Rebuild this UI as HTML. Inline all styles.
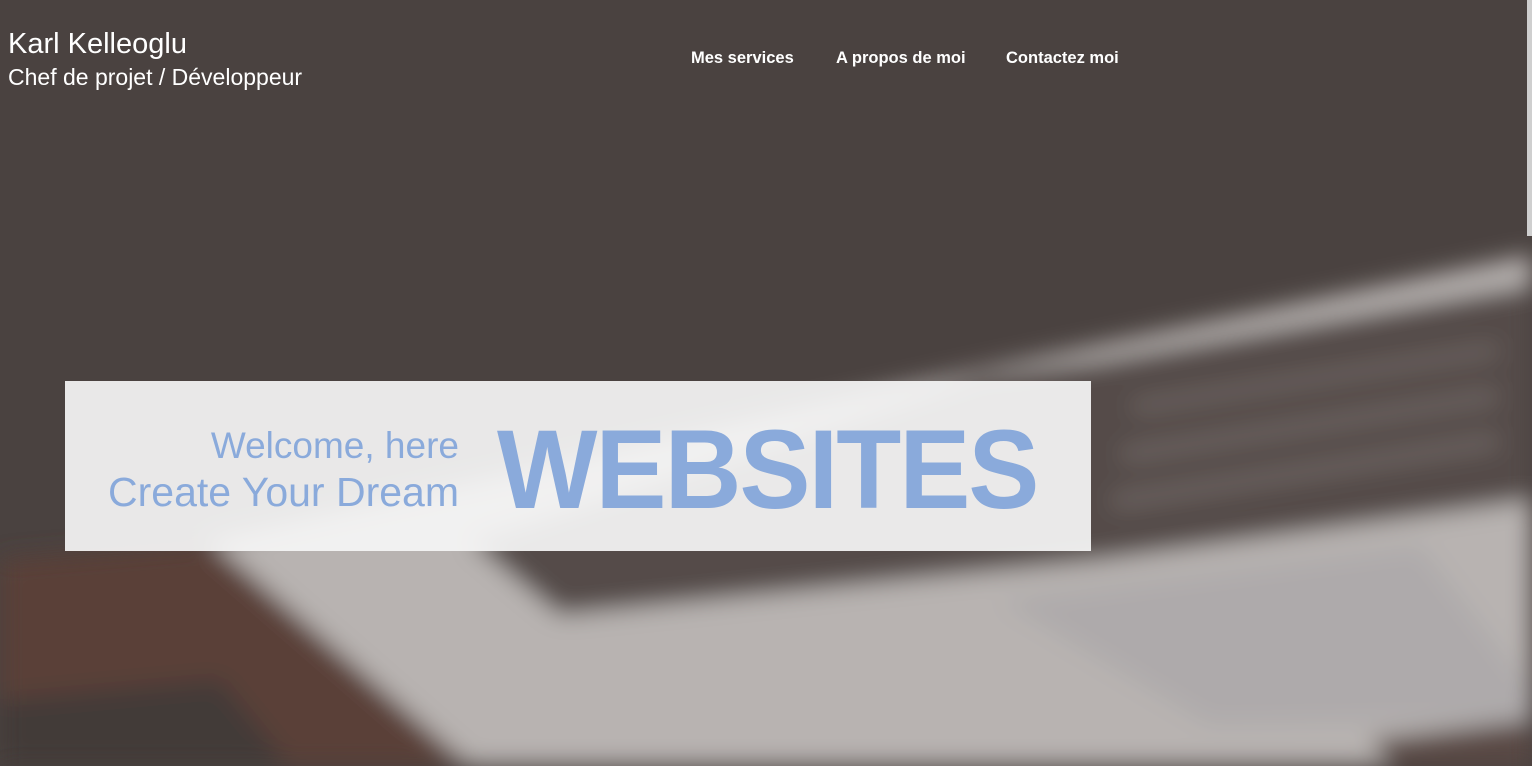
<!DOCTYPE html>
<html><head><meta charset="utf-8"><style>
html,body{margin:0;padding:0;width:1532px;height:766px;overflow:hidden;font-family:"Liberation Sans",sans-serif;background:#4a4240;position:relative}
.bg{position:absolute;left:0;top:0}
.name{position:absolute;left:8px;top:28px;color:#fff;font-size:29px;line-height:32px}
.sub{position:absolute;left:8px;top:64px;color:#fff;font-size:23px;font-weight:300}
.nav{position:absolute;top:49px;color:#fff;font-size:16.5px;font-weight:bold}
.box{position:absolute;left:65px;top:381px;width:1026px;height:170px;background:rgba(245,245,245,0.93)}
.w{position:absolute;right:1073px;top:425px;font-size:37px;color:#8aaadb;font-weight:300;white-space:nowrap}
.c{position:absolute;right:1073px;top:469px;font-size:41px;color:#8aaadb;white-space:nowrap}
.big{position:absolute;left:497px;top:405px;font-size:112px;font-weight:bold;color:#8aaadb;letter-spacing:-2px;line-height:130px;transform:scaleX(0.95);transform-origin:left}
</style></head><body>
<svg class="bg" width="1532" height="766">
<defs><filter id="b"><feGaussianBlur stdDeviation="12"/></filter></defs>
<rect width="1532" height="766" fill="#4a4240"/>
<g filter="url(#b)">
<polygon points="0,560 240,540 480,766 0,766" fill="#5a4138"/>
<polygon points="0,700 220,680 290,766 0,766" fill="#433a38"/>
<polygon points="1532,255 1532,766 470,766 210,540 980,370" fill="#b8b3b1"/>
<polygon points="470,540 560,615 1100,560 1532,500 1532,285 1100,360 980,375" fill="#554c4a"/>
<g fill="#6e6664">
<rect x="1120" y="420" width="380" height="14" transform="rotate(-9 1300 430)"/>
<rect x="1110" y="465" width="390" height="14" transform="rotate(-9 1300 470)"/>
<rect x="1130" y="375" width="370" height="12" transform="rotate(-9 1300 380)"/>
</g>
<polygon points="1000,600 1420,545 1532,690 1532,720 1210,725" fill="#aeaaab"/>
<polygon points="1370,740 1532,720 1532,766 1390,766" fill="#5a4a44"/>
</g>
<rect x="1527" y="0" width="5" height="236" fill="#cfcfcf"/>
</svg>
<div class="name">Karl Kelleoglu</div>
<div class="sub">Chef de projet / Développeur</div>
<div class="nav" style="left:691px">Mes services</div>
<div class="nav" style="left:836px">A propos de moi</div>
<div class="nav" style="left:1006px">Contactez moi</div>
<div class="box"></div>
<div class="w">Welcome, here</div>
<div class="c">Create Your Dream</div>
<div class="big">WEBSITES</div>
</body></html>
